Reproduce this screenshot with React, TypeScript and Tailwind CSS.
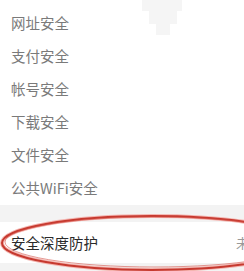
import React from 'react';

const items = ['网址安全', '支付安全', '帐号安全', '下载安全', '文件安全', '公共WiFi安全'];

const font = { fontFamily: '"Noto Sans CJK SC", "Noto Sans", sans-serif' };

export default function App() {
  return (
    <div className="relative w-[244px] h-[271px] overflow-hidden bg-white" style={font}>
      {/* faint watermark blob at top */}
      <svg className="absolute left-[142px] top-0" width="42" height="38" viewBox="0 0 42 38">
        <path d="M0 0 H40 V11 H35 V24 H28 V35 H14 V24 H7 V11 H0 Z" fill="#f5f5f5" />
      </svg>

      <div className="pt-[6px]">
        {items.map((t) => (
          <div key={t} className="h-[33px] flex items-center pl-[11px] text-[14.5px] text-[#7a7a7a]">
            {t}
          </div>
        ))}
      </div>

      <div className="h-[17px] bg-[#f3f3f3] mt-[1px]" />

      <div className="h-[41px] flex items-center justify-between pl-[11px] bg-white">
        <span className="text-[14.5px] text-[#2a2a2a]">安全深度防护</span>
        <span className="text-[13px] text-[#999] translate-x-[5px]">未</span>
      </div>

      <div className="h-[20px] bg-[#f3f3f3]" />

      {/* hand drawn red ellipse */}
      <svg className="absolute left-0 top-0 pointer-events-none" width="244" height="271" viewBox="0 0 244 271">
        <ellipse cx="152" cy="243" rx="150" ry="27" fill="none" stroke="#f4b5b0" strokeWidth="4" />
        <ellipse cx="152" cy="243" rx="150" ry="27" fill="none" stroke="#c6392f" strokeWidth="2" />
        <ellipse cx="154" cy="242" rx="149" ry="25" fill="none" stroke="#d4544a" strokeWidth="1" opacity="0.6" />
      </svg>
    </div>
  );
}
